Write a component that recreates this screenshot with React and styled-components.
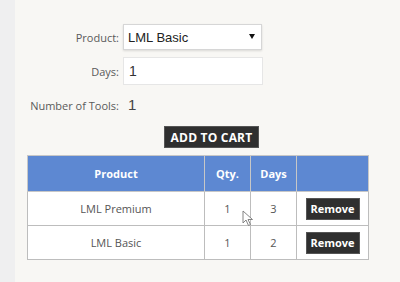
import React, { useState } from "react";
import styled, { createGlobalStyle } from "styled-components";

const Global = createGlobalStyle`
  html, body { margin: 0; padding: 0; }
  body {
    background: #f8f7f4;
    font-family: "Open Sans", "Noto Sans", sans-serif;
    color: #555;
  }
`;

let Page = styled.div`
  display: flex;
  min-height: 282px;
`;

let Strip = styled.div`
  width: 15px;
  background: #efeff0;
  flex: none;
`;

let Content = styled.div`
  flex: 1;
  padding-top: 24px;
  position: relative;
`;

let Form = styled.div`
  display: grid;
  grid-template-columns: 104px 139px;
  column-gap: 4px;
  row-gap: 7px;
  align-items: center;
`;

let Label = styled.label`
  text-align: right;
  font-size: 11px;
  color: #5a5a5a;
  white-space: nowrap;
`;

let SelectWrap = styled.div`
  position: relative;
  height: 26px;
`;

let Select = styled.select`
  appearance: none;
  width: 100%;
  height: 26px;
  box-sizing: border-box;
  border: 1px solid #d6d6d6;
  box-shadow: 0 1px 2px rgba(0, 0, 0, 0.12);
  background: #fff;
  padding: 0 0 0 4px;
  font-family: "Liberation Sans", Arial, sans-serif;
  font-size: 13px;
  color: #222;
  outline: none;
`;

let Arrow = styled.span`
  position: absolute;
  right: 7px;
  top: 10px;
  width: 0;
  height: 0;
  border-left: 3px solid transparent;
  border-right: 3px solid transparent;
  border-top: 5px solid #111;
  pointer-events: none;
`;

let Input = styled.input`
  width: 140px;
  height: 28px;
  box-sizing: border-box;
  border: 1px solid #e6e6e6;
  background: #fff;
  padding: 0 0 0 5px;
  font-family: "Liberation Sans", Arial, sans-serif;
  font-size: 14px;
  color: #333;
  outline: none;
`;

let Value = styled.span`
  font-family: "Liberation Sans", Arial, sans-serif;
  font-size: 15px;
  color: #444;
  padding-left: 5px;
  line-height: 26px;
`;

let DarkBtn = styled.button`
  background: #2f2f2f;
  color: #fff;
  border: 1px solid #555;
  font-family: "Open Sans", "Noto Sans", sans-serif;
  font-weight: 700;
  cursor: pointer;
  padding: 0;
  letter-spacing: ${(p) => (p.$wide ? "0.2px" : "0")};
`;

let CartBtn = styled(DarkBtn)`
  width: 95px;
  height: 22px;
  font-size: 12px;
  margin: 8px 0 0 149px;
  display: block;
`;

let Table = styled.table`
  margin: 7px 0 0 12px;
  border-collapse: collapse;
  width: 341px;
  background: #fff;
  font-size: 11px;
  table-layout: fixed;
`;

let Th = styled.th`
  background: #5d88d2;
  color: #fff;
  font-weight: 700;
  height: 35px;
  padding: 0;
  border: 1px solid #c7c7c7;
`;

let Td = styled.td`
  height: 33px;
  padding: 0;
  text-align: center;
  border: 1px solid #bdbdbd;
  color: #555;
`;

let RemoveBtn = styled(DarkBtn)`
  width: 54px;
  height: 22px;
  font-size: 11px;
`;

let Cursor = styled.svg`
  position: absolute;
  left: 227px;
  top: 210px;
  pointer-events: none;
`;

function App() {
  let [items] = useState([
    { name: "LML Premium", qty: 1, days: 3 },
    { name: "LML Basic", qty: 1, days: 2 },
  ]);

  return (
    <Page>
      <Global />
      <Strip />
      <Content>
        <Form>
          <Label>Product:</Label>
          <SelectWrap>
            <Select defaultValue="basic">
              <option value="basic">LML Basic</option>
              <option value="premium">LML Premium</option>
            </Select>
            <Arrow />
          </SelectWrap>
          <Label>Days:</Label>
          <Input defaultValue="1" />
          <Label>Number of Tools:</Label>
          <Value>1</Value>
        </Form>
        <CartBtn $wide>ADD TO CART</CartBtn>
        <Table>
          <colgroup>
            <col style={{ width: 177 }} />
            <col style={{ width: 46 }} />
            <col style={{ width: 46 }} />
            <col style={{ width: 72 }} />
          </colgroup>
          <thead>
            <tr>
              <Th>Product</Th>
              <Th>Qty.</Th>
              <Th>Days</Th>
              <Th></Th>
            </tr>
          </thead>
          <tbody>
            {items.map((it) => (
              <tr key={it.name}>
                <Td>{it.name}</Td>
                <Td>{it.qty}</Td>
                <Td>{it.days}</Td>
                <Td>
                  <RemoveBtn>Remove</RemoveBtn>
                </Td>
              </tr>
            ))}
          </tbody>
        </Table>
        {/* mouse pointer caught in the screenshot */}
        <Cursor width="12" height="17" viewBox="0 0 12 17">
          <path d="M1 1 L1 13 L4 10 L6.5 15.5 L8.5 14.5 L6 9.5 L10.5 9.5 Z" fill="#fff" stroke="#777" strokeWidth="0.9" />
        </Cursor>
      </Content>
    </Page>
  );
}

export default App;
